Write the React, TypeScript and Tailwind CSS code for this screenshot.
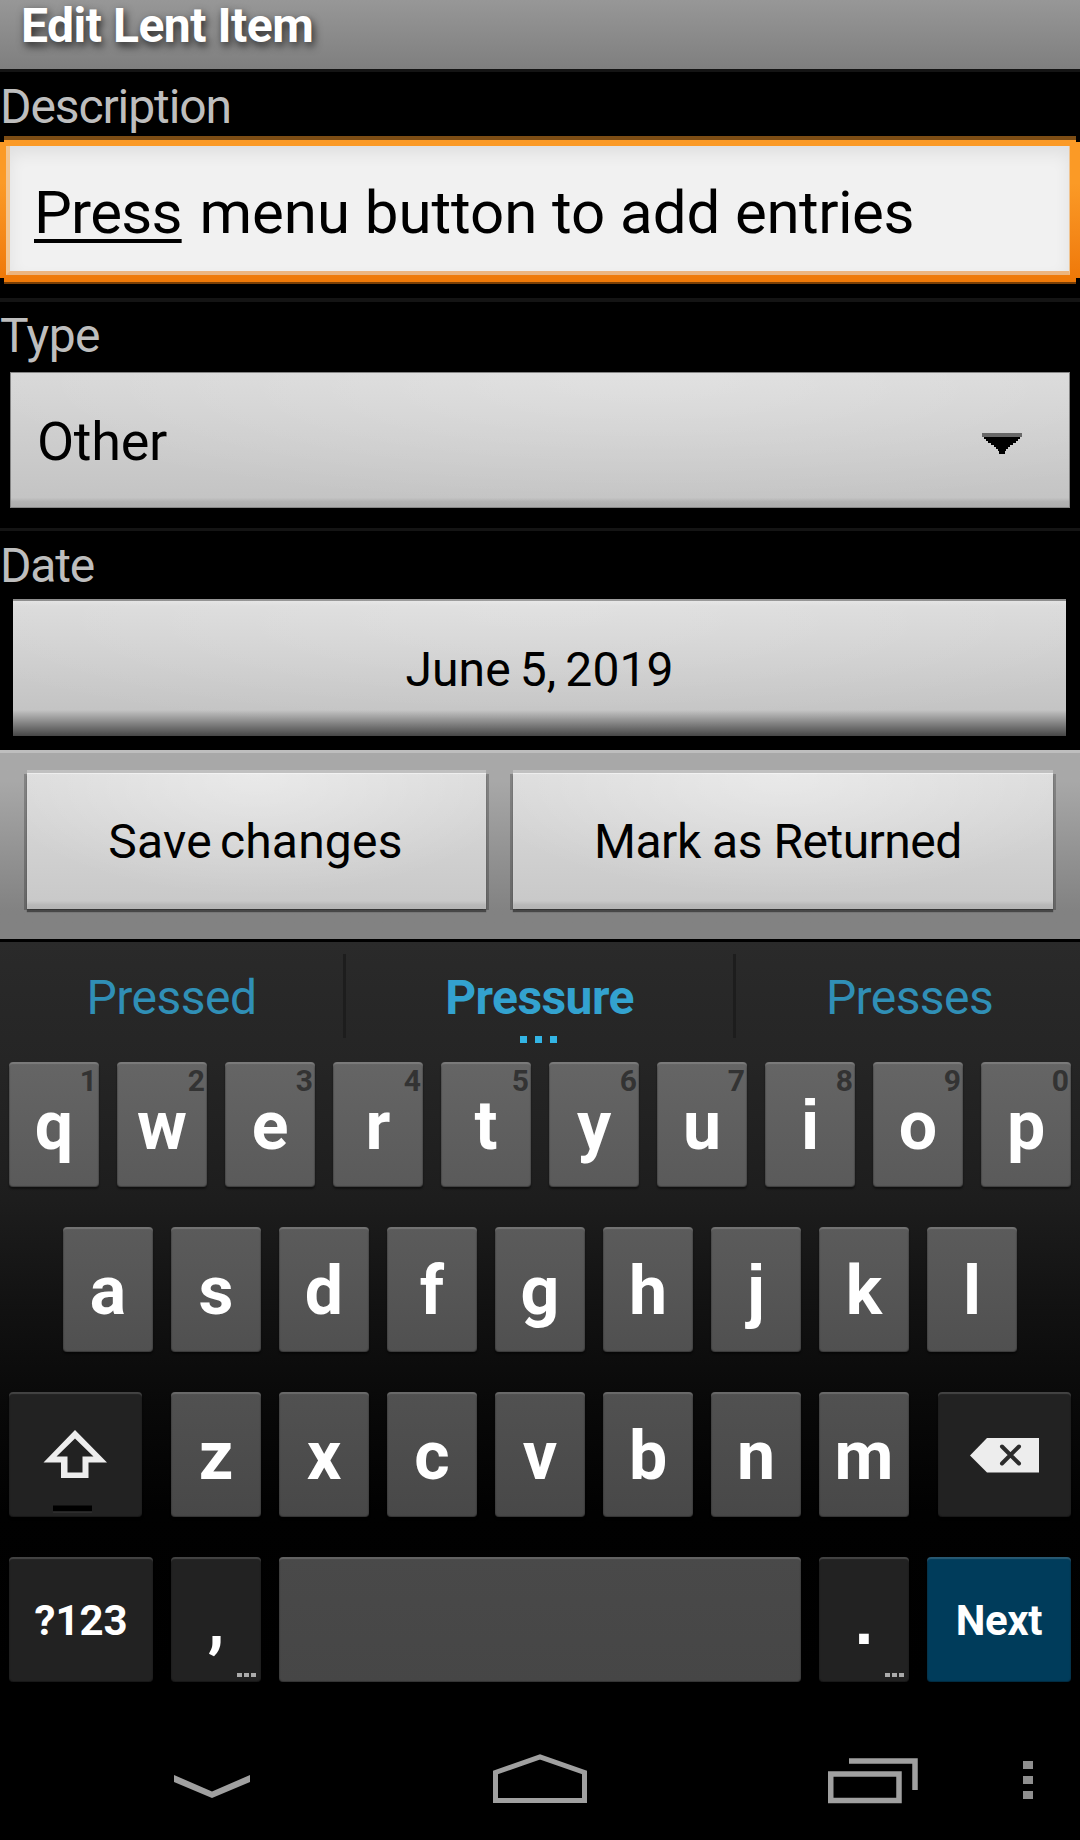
import React from "react";
import type { ReactNode } from "react";

const topRow: [string, string][] = [
  ["q", "1"],
  ["w", "2"],
  ["e", "3"],
  ["r", "4"],
  ["t", "5"],
  ["y", "6"],
  ["u", "7"],
  ["i", "8"],
  ["o", "9"],
  ["p", "0"],
];
const homeRow = ["a", "s", "d", "f", "g", "h", "j", "k", "l"];
const bottomRow = ["z", "x", "c", "v", "b", "n", "m"];

const tones = {
  top: "bg-linear-to-b from-[#656565] to-[#5a5a5a]",
  home: "bg-linear-to-b from-[#5b5b5b] to-[#505050]",
  bottom: "bg-linear-to-b from-[#515151] to-[#484848]",
  space: "bg-linear-to-b from-[#494949] to-[#464646]",
  dark: "bg-[#222222]",
  blue: "bg-[#003c5b]",
};

function Key({
  tone,
  width = "w-[90px]",
  children,
}: {
  tone: keyof typeof tones;
  width?: string;
  children?: ReactNode;
}) {
  return (
    <div
      className={`relative h-[125px] shrink-0 rounded-[4px] text-center font-bold text-white shadow-[inset_0_2px_1px_rgba(255,255,255,0.16),inset_1px_0_1px_rgba(0,0,0,0.18),inset_-1px_0_1px_rgba(0,0,0,0.18),inset_0_-1px_1px_rgba(0,0,0,0.25),0_2px_2px_rgba(0,0,0,0.45)] ${width} ${tones[tone]}`}
    >
      {children}
    </div>
  );
}

/* Letters whose dots are square use the squarer face. */
function Letter({ char }: { char: string }) {
  if (char === "i" || char === "j")
    return <span className="block font-['Liberation_Sans',sans-serif] text-[71px] leading-[125px]">{char}</span>;
  return <span className="block text-[68px] leading-[128px]">{char}</span>;
}

function MoreDots() {
  return (
    <div className="absolute right-[5px] bottom-[5px] flex gap-[2px]">
      {[0, 1, 2].map((n) => (
        <i key={n} className="block h-[4px] w-[5px] bg-[#ababab]" />
      ))}
    </div>
  );
}

function FormLabel({ className, children }: { className: string; children: ReactNode }) {
  return <div className={`text-[48px] whitespace-nowrap text-[#bebebe] ${className}`}>{children}</div>;
}

function ActionButton({ className, children }: { className: string; children: ReactNode }) {
  return (
    <button
      className={`block h-[136px] bg-[radial-gradient(ellipse_60%_90%_at_50%_0%,rgba(255,255,255,0.4),rgba(255,255,255,0)),linear-gradient(#dcdcdc,#c9c9c9_94%,#b8b8b8_97%,#b4b4b4)] text-center text-[48px] leading-[138px] whitespace-nowrap text-black shadow-[inset_0_1px_1px_rgba(255,255,255,0.5),0_3px_1px_rgba(40,40,40,0.65),-3px_1px_0_rgba(0,0,0,0.22),3px_1px_0_rgba(0,0,0,0.22),0_-3px_0_rgba(255,255,255,0.28)] ${className}`}
    >
      {children}
    </button>
  );
}

export default function App() {
  return (
    <div className="flex h-[1840px] w-[1080px] flex-col overflow-hidden bg-black font-['Roboto',sans-serif]">
      <header className="h-[72px] shrink-0 border-b-[3px] border-[#141414] bg-linear-to-b from-[#979797] to-[#7f7f7f] pl-[21px]">
        <h1 className="text-[48px] leading-[52px] font-bold tracking-[-0.5px] text-white [text-shadow:2px_4px_9px_rgba(0,0,0,0.75)]">
          Edit Lent Item
        </h1>
      </header>

      <main className="h-[678px] shrink-0">
        <FormLabel className="h-[64px] leading-[69px] tracking-[-1.1px]">Description</FormLabel>
        <div className="mx-[4px] h-[4px] bg-[#7d4d15]" />
        <div className="mx-[4px] h-[2px] bg-[#fb9a26]" />
        <div className="h-[136px] bg-linear-to-b from-[#fb9a26] from-30% to-[#ef7908] pt-[4px] pr-[10px] pb-[3px] pl-[6px]">
          <div className="h-full border-r border-b-4 border-l-4 border-r-[#f0c492] border-b-[#ecb47e] border-l-[#f3c48e] bg-[#f1f1f1] pl-[24px] text-[60px] leading-[133px] whitespace-pre text-black shadow-[inset_0_8px_16px_rgba(0,0,0,0.07)]">
            <span className="tracking-[-0.75px] underline decoration-[3.5px] underline-offset-[6px] [text-decoration-skip-ink:none]">
              Press
            </span>
            <span className="ml-[3px] tracking-[-0.05px]"> menu button to add </span>
            <span className="tracking-[-0.5px]">entries</span>
          </div>
        </div>
        <div className="mx-[4px] h-[4px] bg-[#ef7908]" />
        <div className="mx-[4px] h-[2px] bg-[#7a3f05]" />

        <div className="mt-[14px] h-[4px] bg-[#141414]" />
        <FormLabel className="h-[70px] leading-[67px] tracking-[-0.5px]">Type</FormLabel>
        <div className="mx-[10px] flex h-[136px] justify-between border border-[#858585] bg-[radial-gradient(ellipse_65%_100%_at_60%_0%,rgba(255,255,255,0.25),rgba(255,255,255,0)),linear-gradient(#d8d8d8,#c4c4c4_93%,#b2b2b2_96%,#adadad)] pr-[47px] pl-[26px]">
          <span className="text-[54px] leading-[137px] tracking-[-0.3px] text-black">Other</span>
          <svg className="mt-[60px] h-[22px] w-[40px]" viewBox="0 0 40 22">
            <path d="M0 0H40V4H0Z" fill="#686868" />
            <path d="M2 4H38V6H36V8H34V10H31V12H28V14H26V16H24V18H23V21H17V18H16V16H14V14H12V12H9V10H6V8H4V6H2Z" fill="#000" />
          </svg>
        </div>
        <div className="mt-[20px] h-[3px] bg-[#141414]" />
        <FormLabel className="h-[68px] leading-[70px] tracking-[-1.2px]">Date</FormLabel>
        <div className="mr-[14px] ml-[13px] h-[137px] bg-[linear-gradient(transparent_111px,rgba(0,0,0,0.64)_137px),radial-gradient(ellipse_65%_100%_at_50%_0%,rgba(255,255,255,0.2),rgba(255,255,255,0)),linear-gradient(#888_2px,#e2e2e2_2px,#dadada_7px,#c3c3c3_115px)] text-center text-[48px] leading-[141px] tracking-[0.1px] [word-spacing:-3px] text-black">
          June 5, 2019
        </div>
      </main>

      <div className="flex h-[189px] shrink-0 border-t-[3px] border-[#bebebe] bg-linear-to-b from-[#a8a8a8] from-15% to-[#828282] to-85% pt-[20px] pl-[27px]">
        <ActionButton className="w-[459px] pr-[2px] tracking-[0.2px] [word-spacing:-4px]">Save changes</ActionButton>
        <ActionButton className="ml-[27px] w-[540px] pr-[10px] tracking-[-0.5px]">Mark as Returned</ActionButton>
      </div>
      <div className="h-[3px] shrink-0 bg-black" />

      <section className="h-[740px] shrink-0 bg-[linear-gradient(#2a2a2a,#252525_120px,#1d1d1d_258px,#121212_360px,#090909_460px,#010101_570px,#000)]">
        <div className="flex h-[120px] text-center text-[48px] leading-[112px] text-[#308fb6]">
          <div className="w-[343px] tracking-[-0.5px]">Pressed</div>
          <div className="mt-[12px] h-[84px] w-[3px] bg-[#1d1d1d]" />
          <div className="relative w-[387px] font-bold tracking-[-0.57px] text-[#33a2cf]">
            Pressure
            <div className="absolute top-[94px] left-[174px] flex gap-[8px]">
              {[0, 1, 2].map((n) => (
                <i key={n} className="block size-[7px] bg-[#33b5e5]" />
              ))}
            </div>
          </div>
          <div className="mt-[12px] h-[84px] w-[3px] bg-[#1d1d1d]" />
          <div className="flex-1 pl-[3px] tracking-[-0.6px]">Presses</div>
        </div>
        <div className="flex flex-col gap-[40px]">
          <div className="flex justify-center gap-[18px]">
            {topRow.map(([char, hint]) => (
              <Key key={char} tone="top">
                <span className="absolute top-0 right-[2px] text-[30px] leading-[37px] text-[#333333]">{hint}</span>
                <Letter char={char} />
              </Key>
            ))}
          </div>
          <div className="flex justify-center gap-[18px]">
            {homeRow.map((char) => (
              <Key key={char} tone="home">
                <Letter char={char} />
              </Key>
            ))}
          </div>
          <div className="flex justify-between px-[9px]">
            <Key tone="dark" width="w-[133px]">
              <svg className="absolute inset-0" width="132" height="125" viewBox="0 0 132 125">
                <path
                  d="M66 38L98 70.5H79.5V86H52V70.5H34.500Z M66 46.5L47.500 64.500H58.500V80.500H73.500V64.500H84.500Z"
                  fill="#ededed"
                  fillRule="evenodd"
                />
                <path d="M44 113.500H83V119.500H44Z" fill="#000" />
                <path d="M44 119.500H83V120.500H44Z" fill="#383838" />
              </svg>
            </Key>
            <div className="flex gap-[18px]">
              {bottomRow.map((char) => (
                <Key key={char} tone="bottom">
                  <Letter char={char} />
                </Key>
              ))}
            </div>
            <Key tone="dark" width="w-[133px]">
              <svg className="absolute inset-0" width="133" height="125" viewBox="0 0 133 125">
                <path d="M32 63.500L49 46H101V80.500H49Z" fill="#ededed" />
                <path d="M64 54.500L81 71.500M81 54.500L64 71.500" stroke="#2c2c2c" strokeWidth="4" strokeLinecap="round" />
              </svg>
            </Key>
          </div>
          <div className="flex gap-[18px] px-[9px]">
            <Key tone="dark" width="w-[144px]">
              <span className="block text-[42px] leading-[127px] tracking-[-0.1px]">?123</span>
            </Key>
            <Key tone="dark">
              <Letter char="," />
              <MoreDots />
            </Key>
            <Key tone="space" width="w-[522px]" />
            <Key tone="dark">
              <span className="block font-['Liberation_Sans',sans-serif] text-[68px] leading-[127px]">.</span>
              <MoreDots />
            </Key>
            <Key tone="blue" width="w-[144px]">
              <span className="block text-[42px] leading-[127px] tracking-[-0.4px]">Next</span>
            </Key>
          </div>
        </div>
      </section>

      <nav className="flex flex-1 text-[#a0a0a0]">
        <svg className="mt-[93px] ml-[174px] h-[23px] w-[76px] shrink-0" viewBox="0 0 76 23">
          <path d="M0 0L38 16.500L76 0V7L38 23L0 7Z" fill="currentColor" />
        </svg>
        <svg className="mt-[72px] ml-[243px] h-[50px] w-[94px] shrink-0" viewBox="0 0 94 50">
          <path d="M2.500 46.500V18.500L47 2.800L91.500 18.500V46.500Z" fill="none" stroke="currentColor" strokeWidth="5" />
        </svg>
        <svg className="mt-[76px] ml-[241px] h-[46px] w-[90px] shrink-0" viewBox="0 0 90 46">
          <path d="M2.750 16H71V42.500H2.750Z" fill="none" stroke="currentColor" strokeWidth="5.500" />
          <path d="M21 3H87V32" fill="none" stroke="currentColor" strokeWidth="5.500" />
        </svg>
        <div className="mt-[79px] ml-[105px] flex flex-col gap-[7px]">
          {[0, 1, 2].map((n) => (
            <i key={n} className="block h-[8px] w-[10px] bg-[#8f8f8f]" />
          ))}
        </div>
      </nav>
    </div>
  );
}
